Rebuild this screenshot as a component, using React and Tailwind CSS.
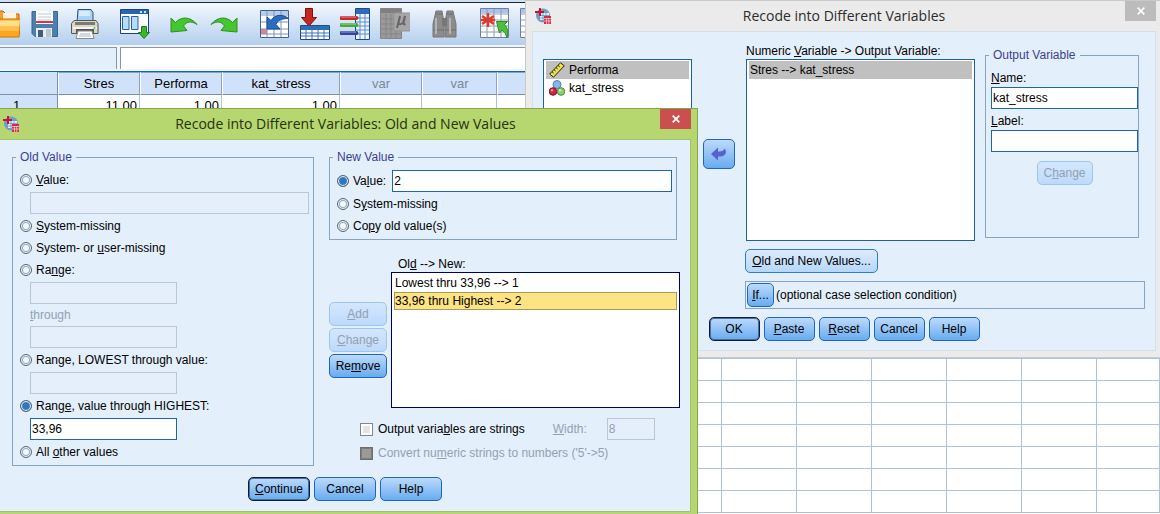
import { useState } from "react";
import clsx from "clsx";

const columns = [
  { name: "Stres", width: "w-[82px]", value: "11.00" },
  { name: "Performa", width: "w-[82px]", value: "1.00" },
  { name: "kat_stress", width: "w-[118px]", value: "1.00" },
  { name: "var", width: "w-[82px]" },
  { name: "var", width: "w-[75px]" },
  { name: "", width: "w-[75px]" },
  { name: "", width: "w-[75px]" },
  { name: "", width: "w-[75px]" },
  { name: "", width: "w-[75px]" },
  { name: "", width: "w-[75px]" },
  { name: "", width: "w-[75px]" },
  { name: "", width: "w-[75px]" },
  { name: "", width: "w-[75px]" },
  { name: "", width: "" },
];

const rowNumbers = Array.from({ length: 19 }, (_, index) => index + 1);

/* ---------- toolbar icons ---------- */

function Icon({ children }) {
  return (
    <svg className="h-8 w-[30px] shrink-0" viewBox="0 0 30 32" fill="none" aria-hidden="true">
      {children}
    </svg>
  );
}

function OpenIcon() {
  return (
    <Icon>
      <path d="M3 27V3h10l3 3h13v6H8z" fill="#f0a030" stroke="#b8690c" />
      <path d="M13 5h13v7H13z" fill="#fff3da" />
      <path d="M3 29 9 11h22l-2 18z" fill="#ffa51f" stroke="#c87410" />
      <path d="M9.500 12.500h20.500l-1 6H7.500z" fill="#ffe08a" />
      <path d="M7 19h22l-.5 4H5.800z" fill="#ffc04e" />
    </Icon>
  );
}

function SaveIcon() {
  return (
    <Icon>
      <path d="M2 3.500h25.500v25H5l-3-3z" fill="#4b7fb0" stroke="#39658f" />
      <path d="M6 3h17v13H6z" fill="#fafcff" />
      <path d="M8 6h13M8 9h13M8 12h13" stroke="#c3ccd6" />
      <path d="M6 13h17v2H6z" fill="#d3374a" />
      <path d="M6 20h16v9H6z" fill="#e9edf2" />
      <path d="M8 22h5v7H8z" fill="#3f5f80" />
      <path d="M16 21h5v8h-5z" fill="#bcc6d0" />
    </Icon>
  );
}

function PrinterIcon() {
  return (
    <Icon>
      <path d="M8 1.500h13l2 3v10H7z" fill="#a9d2fb" stroke="#2f4f74" />
      <path d="M9 3h11v5H9z" fill="#d7ebff" />
      <path d="M4 12.500h22l2 3v10H1.500v-10z" fill="#d9d6cc" stroke="#57564f" />
      <path d="M5 14h20v3H5z" fill="#7c7b73" />
      <path d="M3 19h24v2H3z" fill="#f6f4ee" />
      <path d="M6 21h18v4H6z" fill="#55544e" />
      <path d="M8 23h14l2 7.500H6z" fill="#fff" stroke="#8c8b85" />
      <path d="M10 26h10M9 28h12" stroke="#a5b3c4" />
      <circle cx="24.500" cy="20" r="1" fill="#4cc340" />
    </Icon>
  );
}

function RecallIcon() {
  return (
    <Icon>
      <path d="M.5 1.500h28v24H.5z" fill="#fdfeff" stroke="#1d4379" />
      <path d="M1 2h27v4H1z" fill="#2864b0" />
      <path d="M20 3h2v2h-2zM24 3h2v2h-2z" fill="#cfe0f5" />
      <path d="M2.500 8.500h6.500v13H2.500zM11.500 8.500H18v13h-6.500z" fill="#b7dbfb" stroke="#2360a5" />
      <path d="M21.500 18.500h5v6h3l-5.500 6-5.500-6h3z" fill="#3cb530" stroke="#1d7a16" />
    </Icon>
  );
}

function UndoIcon() {
  return (
    <Icon>
      <path d="M1 10l4.500 4.500C11 8.500 20 8 27 16.500c-6-4-10.500-3-13.500 1.500l3.500 4.500-16 1.500z" fill="#45c530" stroke="#2c8f1f" />
    </Icon>
  );
}

function RedoIcon() {
  return (
    <Icon>
      <path d="M27 10l-4.500 4.500C17 8.500 8 8 1 16.500c6-4 10.500-3 13.500 1.500L11 22.500l16 1.500z" fill="#45c530" stroke="#2c8f1f" />
    </Icon>
  );
}

function CaseIcon() {
  return (
    <Icon>
      <path d="M.5 2.500h28v27H.5z" fill="#fff" stroke="#41628f" />
      <path d="M1 3h27v3H1z" fill="#b5cdf0" />
      <path d="M1 21h6v5H1z" fill="#e0848c" />
      <path d="M7 3v26M14 3v26M21 3v26M1 7h27M1 14h27M1 21h27M1 26h27" stroke="#7e93b8" />
      <path d="M7 9v12h13l-4-4.500c1.500-4 5-6 12.500-6C23 6 15 6 11 12.500z" fill="#2b6cc4" stroke="#184c97" />
    </Icon>
  );
}

function GoToVariableIcon() {
  return (
    <Icon>
      <path d="M5.500.5h7v9h4L9 18 1.500 9.500h4z" fill="#c8261d" stroke="#7c120d" />
      <path d="M.5 17.500h29v14H.5z" fill="#fff" stroke="#1f4c88" />
      <path d="M1 18h28v4H1z" fill="#2f6dba" />
      <path d="M6 22v9M12 22v9M18 22v9M24 22v9M1 25h28M1 28h28" stroke="#3b73bb" />
    </Icon>
  );
}

function VariablesIcon() {
  return (
    <Icon>
      <path d="M15.500.5h14v31h-14z" fill="#eef5ff" stroke="#1f4c88" />
      <path d="M16 1h13v5H16z" fill="#2f6dba" />
      <path d="M20 6v25M25 6v25M16 10h13M16 14h13M16 18h13M16 22h13M16 26h13" stroke="#5f8cc8" />
      <path d="M1.500 10h15" stroke="#c42b2b" strokeWidth="4" strokeLinecap="round" />
      <path d="M1.500 17h15" stroke="#3fae35" strokeWidth="4" strokeLinecap="round" />
      <path d="M1.500 25h15" stroke="#34459e" strokeWidth="4" strokeLinecap="round" />
      <path d="M1 9h15M1 16h15M1 24h15" stroke="#fff" strokeOpacity=".5" />
    </Icon>
  );
}

function StatisticsIcon() {
  return (
    <Icon>
      <path d="M.5.500h21v30H.5z" fill="#9a9a9a" stroke="#858585" />
      <path d="M1 1h20v4H1z" fill="#808080" />
      <path d="M6 6v24M11 6v24M16 6v24M1 11h20M1 16h20M1 21h20M1 26h20" stroke="#858585" />
      <path d="M14 5h17v18H14z" fill="#a6a6a6" stroke="#939393" />
      <path d="M20 8l-3 12M20 8l-1.500 7q1 2.500 4.500 0L25 8l-1.500 7q0 2 2 1" stroke="#666" strokeWidth="2" />
    </Icon>
  );
}

function FindIcon() {
  return (
    <Icon>
      <path d="M6 3h6l1 6 1 5v15H3V16z" fill="#8c8c8c" stroke="#777" />
      <path d="M17 3h6l3 13v13H15V14l1-5z" fill="#8c8c8c" stroke="#777" />
      <path d="M12 10h5v8h-5z" fill="#777" />
      <path d="M6 6h6M17 6h6M3 22h11M15 22h11" stroke="#6d6d6d" />
      <path d="M6 10v16M20 10v16" stroke="#b4b4b4" strokeWidth="2" />
    </Icon>
  );
}

function InsertCaseIcon() {
  return (
    <Icon>
      <path d="M.5.500h28v29H.5z" fill="#fff" stroke="#6d80a0" />
      <path d="M1 1h27v4H1z" fill="#a9c3ee" />
      <path d="M7 1v28M14 1v28M21 1v28M1 6h27M1 12h27M1 18h27M1 24h27" stroke="#8d9cb8" />
      <path d="M8 5v14M2 8l12 8M14 8 2 16M1 12h14" stroke="#e0392b" strokeWidth="2.500" />
      <path d="M16.500 13.500h11l-3 3q5 5 2.500 13.500-1-6-5-8l-2.500 3z" fill="#4cc23a" stroke="#2b8a20" />
    </Icon>
  );
}

function InsertVariableIcon() {
  return (
    <Icon>
      <path d="M.5.500h28v29H.5z" fill="#fff" stroke="#6d80a0" />
      <path d="M1 1h27v4H1z" fill="#a9c3ee" />
      <path d="M7 1v28M14 1v28M21 1v28M1 6h27M1 12h27M1 18h27M1 24h27" stroke="#8d9cb8" />
    </Icon>
  );
}

const toolGroups = [
  [
    { label: "Open data document", icon: OpenIcon },
    { label: "Save this document", icon: SaveIcon },
    { label: "Print", icon: PrinterIcon },
  ],
  [{ label: "Recall recently used dialogs", icon: RecallIcon }],
  [
    { label: "Undo", icon: UndoIcon },
    { label: "Redo", icon: RedoIcon },
  ],
  [
    { label: "Go to case", icon: CaseIcon },
    { label: "Go to variable", icon: GoToVariableIcon },
    { label: "Variables", icon: VariablesIcon },
    { label: "Run descriptive statistics", icon: StatisticsIcon },
  ],
  [{ label: "Find", icon: FindIcon }],
  [
    { label: "Insert cases", icon: InsertCaseIcon },
    { label: "Insert variable", icon: InsertVariableIcon },
  ],
];

/* ---------- dialog icons ---------- */

function AppIcon() {
  return (
    <svg className="size-4 shrink-0" viewBox="0 0 16 16" aria-hidden="true">
      <circle cx="8" cy="7.500" r="7" fill="#6f9cc9" />
      <path d="M5 5h9v7H5z" fill="#e6f0fa" />
      <path d="M5 7.500h9M5 10h9M8 5v7M11 5v7" stroke="#6b93bd" strokeWidth=".8" />
      <path d="M4 0h2v3h3v2H6v3H4V5H0V3h4z" fill="#c5162e" />
      <path d="M9 8h7v8H9z" fill="#d42a44" />
      <path d="M9 10.500h7M9 13h7M11.500 10v6M13.800 10v6" stroke="#f7cdd3" strokeWidth=".8" />
    </svg>
  );
}

function ScaleIcon() {
  return (
    <svg className="size-4 shrink-0" viewBox="0 0 16 16" aria-hidden="true">
      <path d="M.7 12 11.500.8l3.800 3L4.500 15.200z" fill="#f2e14c" stroke="#26240a" />
      <path d="M3 9.700l1.700 1.500M5 7.600l1.700 1.500M7 5.500 8.700 7M9 3.400l1.700 1.500" stroke="#26240a" />
    </svg>
  );
}

function NominalIcon() {
  return (
    <svg className="size-4 shrink-0" viewBox="0 0 16 16" aria-hidden="true">
      <circle cx="8" cy="4.500" r="4" fill="#86b5ea" stroke="#4f7fb8" />
      <circle cx="4" cy="11.500" r="3.800" fill="#d0243c" stroke="#8d1226" />
      <circle cx="12" cy="11.500" r="3.800" fill="#8ecb74" stroke="#4f8c3c" />
      <circle cx="3" cy="10.300" r="1.200" fill="#f29aa6" />
      <circle cx="11" cy="10.300" r="1.200" fill="#d5f0c8" />
    </svg>
  );
}

function CloseIcon() {
  return (
    <svg className="size-2" viewBox="0 0 8 8" aria-hidden="true">
      <path d="M.7.7l6.600 6.600M7.300.7.700 7.300" stroke="#fff" strokeWidth="1.700" />
    </svg>
  );
}

function ArrowIcon() {
  return (
    <svg className="h-3.5 w-4" viewBox="0 0 16 14" aria-hidden="true">
      <path d="M0 7 7 .5V4.500h1.500Q12 4.500 14 1.500q2 4-.5 6.500Q12 9.500 8.500 9.500H7v4z" fill="#5a5fd0" />
    </svg>
  );
}

/* ---------- controls ---------- */

function Button({ tone = "normal", className, children, ...props }) {
  return (
    <button
      type="button"
      className={clsx(
        "flex h-6 items-center justify-center whitespace-nowrap rounded-[5px] border bg-linear-to-b",
        tone === "normal" && "border-[#2068b0] from-[#bcdafa] to-[#66abf0]",
        tone === "light" && "border-[#2f7fc0] from-[#dcebfd] to-[#b6d7fa]",
        tone === "default" && "border-[#0c1c3c] from-[#bcdafa] to-[#66abf0] shadow-[inset_0_0_0_1px_#4d6c98]",
        tone === "disabled" && "border-[#9cc6ea] from-[#d3e7fd] to-[#bddafb] text-[#93a0b2]",
        className
      )}
      disabled={tone === "disabled"}
      {...props}
    >
      {children}
    </button>
  );
}

function TextField({ className, ...props }) {
  return (
    <input
      type="text"
      className={clsx(
        "h-[22px] min-w-0 border border-[#1f66a8] bg-white px-px outline-none disabled:border-[#b9c6d4] disabled:bg-[#e4effb] disabled:text-[#93a0b2]",
        className
      )}
      {...props}
    />
  );
}

function RadioRow({ name, value, selected, onSelect, children }) {
  return (
    <label className="flex h-[22px] items-center gap-1 whitespace-nowrap">
      <input
        type="radio"
        name={name}
        checked={selected === value}
        onChange={() => onSelect(value)}
        className="size-3 shrink-0 appearance-none rounded-full border border-[#54687a] bg-[#f4f8fc] shadow-[inset_0_0_0_1px_#f4f8fc,inset_0_0_0_2px_#9aa9b8] checked:bg-[#2a78c8] checked:shadow-[inset_0_0_0_1px_#eaf3fc,inset_0_0_0_2px_#4f7fb0]"
      />
      <span>{children}</span>
    </label>
  );
}

function Group({ title, className, children }) {
  return (
    <fieldset className={clsx("min-w-0 border border-[#87a5c2]", className)}>
      <legend className="ml-[3px] h-4 px-1 leading-4 text-[#3e3e94]">{title}</legend>
      {children}
    </fieldset>
  );
}

/* ---------- data editor ---------- */

function DataEditor() {
  return (
    <div>
      <header className="h-[45px] border-t-2 border-[#cfe0f4] bg-white">
        <div className="flex h-[43px] items-center gap-5 overflow-hidden border-t border-[#1c2430] bg-linear-to-b from-[#f3f8fe] to-[#b4cfee]">
          {toolGroups.map((group, index) => (
            <div key={index} className="flex gap-2.5 first:-ml-2.5">
              {group.map(({ label, icon: ToolIcon }) => (
                <button key={label} type="button" aria-label={label}>
                  <ToolIcon />
                </button>
              ))}
            </div>
          ))}
        </div>
      </header>

      <div className="flex h-[27px] gap-[3px] border-b border-[#0a6aa8] bg-[#f1f5fa] pt-0.5 pb-0.5">
        <div className="w-[117px] border-t border-r border-[#8b97a5] bg-[#e3effb]" />
        <input
          type="text"
          aria-label="Cell value"
          className="min-w-0 flex-1 border-t border-l border-[#8b97a5] bg-white"
        />
      </div>

      <table className="w-full table-fixed border-separate border-spacing-0 text-[13px]">
        <thead>
          <tr>
            <th className="h-[23px] w-[58px] border-r border-b border-[#7c90a8] bg-[#cfe2fa]" aria-label="Case" />
            {columns.map((column, index) => (
              <th
                key={index}
                className={clsx(
                  "h-[23px] border border-l-white border-t-[#8ea3bb] border-r-[#8ea3bb] border-b-[#7c90a8] bg-[#cfe2fa] p-0 font-normal",
                  column.width,
                  column.name === "var" && "text-[#7c8794]"
                )}
              >
                {column.name}
              </th>
            ))}
          </tr>
        </thead>
        <tbody>
          {rowNumbers.map((number) => (
            <tr key={number}>
              <th className="h-[22px] border-r border-b border-[#7c90a8] bg-[#cfe2fa] py-0 pr-6 pl-0 font-normal">
                {number}
              </th>
              {columns.map((column, index) => (
                <td key={index} className="h-[22px] border-r border-b border-[#afc2da] bg-white px-0.5 py-0 text-right">
                  {number === 1 ? column.value : null}
                </td>
              ))}
            </tr>
          ))}
        </tbody>
      </table>
    </div>
  );
}

/* ---------- dialogs ---------- */

function RecodeDialog() {
  return (
    <section
      aria-label="Recode into Different Variables"
      className="absolute top-0 right-0 left-[525px] border-t border-b border-l border-[#c9c9c9] bg-[#ebebeb] pr-1 pb-1.5 pl-1.5"
    >
      <div className="flex h-[30px] items-center pl-[3px]">
        <AppIcon />
        <h2 className="flex-1 pl-3 text-center font-['Open_Sans',sans-serif] text-sm text-[#2b2b2b]">
          Recode into Different Variables
        </h2>
        <button type="button" aria-label="Close" className="flex h-5 w-[31px] items-center justify-center self-start bg-[#bcbcbc]">
          <CloseIcon />
        </button>
      </div>

      <div className="border border-[#d4dfea] bg-[#e3effb] pt-[11px] pb-[9px] pl-2.5">
        <div className="flex pr-4">
          <ul className="mt-4 w-[149px] border border-[#1f5fa8] bg-white px-0.5 py-px">
            <li className="flex h-[18px] items-center gap-1 bg-[#c0c0c0] pl-[3px]">
              <ScaleIcon />
              Performa
            </li>
            <li className="flex h-[18px] items-center gap-1 pl-[3px]">
              <NominalIcon />
              kat_stress
            </li>
          </ul>

          <div className="flex flex-col justify-center px-[11px] pt-6">
            <Button className="h-[30px] w-8" aria-label="Move variable">
              <ArrowIcon />
            </Button>
          </div>

          <div className="flex-1">
            <p className="h-4 leading-4">
              Numeric <u>V</u>ariable -&gt; Output Variable:
            </p>
            <ul className="h-[182px] border border-[#1f5fa8] bg-white px-0.5 py-px">
              <li className="flex h-[18px] items-center bg-[#c0c0c0] pl-px">Stres --&gt; kat_stress</li>
            </ul>
          </div>

          <Group title="Output Variable" className="mt-1 mb-[3px] ml-2.5 w-[154px]">
            <div className="flex flex-col pl-[5px]">
              <label htmlFor="output-name" className="mt-1.5 h-[18px] leading-[18px]">
                <u>N</u>ame:
              </label>
              <TextField id="output-name" defaultValue="kat_stress" />
              <label htmlFor="output-label" className="mt-[3px] h-[18px] leading-[18px]">
                <u>L</u>abel:
              </label>
              <TextField id="output-label" />
              <Button tone="disabled" className="mt-[9px] w-14 self-center">
                <span>
                  C<u>h</u>ange
                </span>
              </Button>
            </div>
          </Group>
        </div>

        <div className="mt-2 pr-2.5 pl-[202px]">
          <Button tone="light" className="w-[133px]">
            <span>
              <u>O</u>ld and New Values...
            </span>
          </Button>
          <div className="mt-2 flex h-7 items-center gap-0.5 border border-[#87a5c2] pl-px">
            <Button className="w-[27px]">
              <span>
                <u>I</u>f...
              </span>
            </Button>
            <span>(optional case selection condition)</span>
          </div>
        </div>

        <div className="mt-2 flex justify-center gap-1 pr-2.5">
          <Button tone="default" className="w-[51px]">
            OK
          </Button>
          <Button className="w-[51px]">
            <span>
              <u>P</u>aste
            </span>
          </Button>
          <Button className="w-[51px]">
            <span>
              <u>R</u>eset
            </span>
          </Button>
          <Button className="w-[51px]">Cancel</Button>
          <Button className="w-[51px]">Help</Button>
        </div>
      </div>
    </section>
  );
}

function OldValueGroup() {
  const [selected, setSelected] = useState("highest");

  return (
    <Group title="Old Value" className="w-[302px]">
      <div className="flex flex-col pt-1 pr-1 pb-0.5 pl-[7px]">
        <RadioRow name="old" value="value" selected={selected} onSelect={setSelected}>
          <u>V</u>alue:
        </RadioRow>
        <TextField aria-label="Old value" disabled className="my-px ml-2.5" />
        <RadioRow name="old" value="system" selected={selected} onSelect={setSelected}>
          <u>S</u>ystem-missing
        </RadioRow>
        <RadioRow name="old" value="user" selected={selected} onSelect={setSelected}>
          System- or <u>u</u>ser-missing
        </RadioRow>
        <RadioRow name="old" value="range" selected={selected} onSelect={setSelected}>
          Ra<u>n</u>ge:
        </RadioRow>
        <TextField aria-label="Range from" disabled className="my-px ml-2.5 w-[147px]" />
        <label htmlFor="range-through" className="ml-2.5 h-5 leading-5 text-[#93a0b2]">
          <u>t</u>hrough
        </label>
        <TextField id="range-through" disabled className="my-px ml-2.5 w-[147px]" />
        <RadioRow name="old" value="lowest" selected={selected} onSelect={setSelected}>
          Ran<u>g</u>e, LOWEST through value:
        </RadioRow>
        <TextField aria-label="Lowest through" disabled className="my-px ml-2.5 w-[147px]" />
        <RadioRow name="old" value="highest" selected={selected} onSelect={setSelected}>
          Rang<u>e</u>, value through HIGHEST:
        </RadioRow>
        <TextField aria-label="Through highest" defaultValue="33,96" className="my-px ml-2.5 w-[147px]" />
        <RadioRow name="old" value="other" selected={selected} onSelect={setSelected}>
          All <u>o</u>ther values
        </RadioRow>
      </div>
    </Group>
  );
}

function NewValueGroup() {
  const [selected, setSelected] = useState("value");

  return (
    <Group title="New Value" className="mr-[3px]">
      <div className="pt-1 pr-1 pb-0.5 pl-[7px]">
        <div className="flex h-6 items-center gap-1.5">
          <RadioRow name="new" value="value" selected={selected} onSelect={setSelected}>
            Va<u>l</u>ue:
          </RadioRow>
          <TextField aria-label="New value" defaultValue="2" className="flex-1" />
        </div>
        <RadioRow name="new" value="system" selected={selected} onSelect={setSelected}>
          S<u>y</u>stem-missing
        </RadioRow>
        <RadioRow name="new" value="copy" selected={selected} onSelect={setSelected}>
          Co<u>p</u>y old value(s)
        </RadioRow>
      </div>
    </Group>
  );
}

function ValuesDialog() {
  return (
    <section
      aria-label="Old and New Values"
      className="absolute top-[108px] left-0 w-[698px] border-t border-r border-[#86a648] bg-[#b6d76f] pr-1.5 pb-2"
    >
      <div className="flex h-[30px] items-center pl-[3px]">
        <AppIcon />
        <h2 className="flex-1 pl-3 text-center font-['Open_Sans',sans-serif] text-sm text-[#27300f]">
          Recode into Different Variables: Old and New Values
        </h2>
        <button type="button" aria-label="Close" className="flex h-5 w-[31px] items-center justify-center self-start bg-[#c9504f]">
          <CloseIcon />
        </button>
      </div>

      <div className="border-t border-r border-b border-[#a3bf74] bg-[#e3effb] pt-[9px] pb-2.5">
        <div className="flex gap-[15px] pr-2.5 pl-3">
          <OldValueGroup />

          <div className="flex-1">
            <NewValueGroup />

            <div className="mt-4 flex gap-1">
              <div className="flex w-[58px] flex-col gap-0.5 pt-[46px]">
                <Button tone="disabled">
                  <span>
                    <u>A</u>dd
                  </span>
                </Button>
                <Button tone="disabled">
                  <span>
                    <u>C</u>hange
                  </span>
                </Button>
                <Button>
                  <span>
                    Re<u>m</u>ove
                  </span>
                </Button>
              </div>
              <div className="flex-1">
                <p className="h-4 pl-[7px] leading-4">
                  Ol<u>d</u> --&gt; New:
                </p>
                <ul className="h-[136px] border border-[#00006c] bg-white px-0.5 py-px">
                  <li className="flex h-[18px] items-center pl-px">Lowest thru 33,96 --&gt; 1</li>
                  <li className="flex h-[18px] items-center border border-[#a39a5c] bg-[#fde382]">
                    33,96 thru Highest --&gt; 2
                  </li>
                </ul>
              </div>
            </div>

            <div className="mt-2.5 ml-[31px] flex items-center">
              <label className="flex items-center gap-[5px]">
                <input
                  type="checkbox"
                  className="size-[13px] appearance-none border border-[#7b8792] bg-[#e4e4e4] shadow-[inset_0_0_0_2px_#fff] checked:bg-[#2a78c8]"
                />
                <span>
                  Output varia<u>b</u>les are strings
                </span>
              </label>
              <label htmlFor="string-width" className="ml-7 text-[#93a0b2]">
                <u>W</u>idth:
              </label>
              <TextField id="string-width" defaultValue="8" disabled className="ml-5 w-12" />
            </div>
            <label className="mt-0.5 ml-[31px] flex h-[22px] items-center gap-[5px] text-[#93a0b2]">
              <input
                type="checkbox"
                disabled
                className="size-[13px] appearance-none border border-[#6e6e6e] bg-[#9a9a96] shadow-[inset_0_0_0_1px_#7c7c7c]"
              />
              <span>
                Convert nu<u>m</u>eric strings to numbers ('5'-&gt;5)
              </span>
            </label>
          </div>
        </div>

        <div className="mt-[11px] flex justify-center gap-1">
          <Button tone="default" className="w-[62px]">
            <span>
              <u>C</u>ontinue
            </span>
          </Button>
          <Button className="w-[62px]">Cancel</Button>
          <Button className="w-[62px]">Help</Button>
        </div>
      </div>
    </section>
  );
}

export default function App() {
  return (
    <main className="relative h-screen overflow-hidden bg-white font-['Liberation_Sans',Arial,sans-serif] text-xs text-black">
      <DataEditor />
      <RecodeDialog />
      <ValuesDialog />
    </main>
  );
}
